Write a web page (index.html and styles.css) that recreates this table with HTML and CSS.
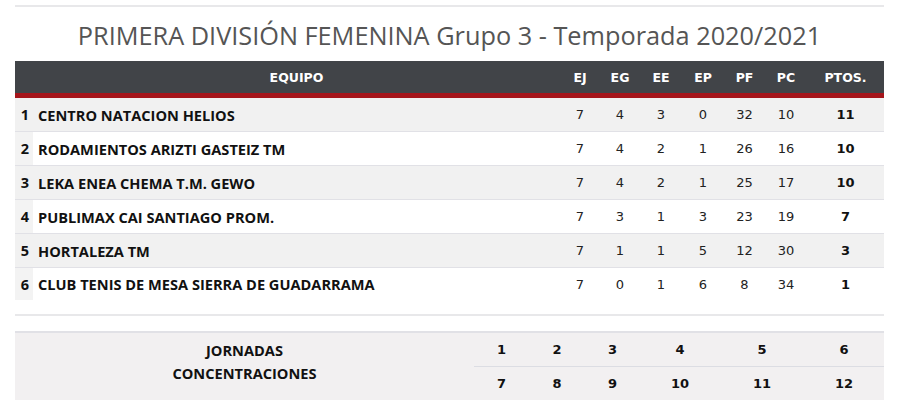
FILE: index.html
```html
<!DOCTYPE html>
<html>
<head>
<meta charset="utf-8">
<link rel="stylesheet" href="styles.css">
</head>
<body>
<div class="page">
  <div class="topline"></div>
  <h1 class="title">PRIMERA DIVISIÓN FEMENINA Grupo 3 - Temporada 2020/2021</h1>
  <table class="standings">
    <colgroup>
      <col class="c-rank"><col class="c-name"><col class="c-n40"><col class="c-n40"><col class="c-n42"><col class="c-n42"><col class="c-n41"><col class="c-n42"><col class="c-pts">
    </colgroup>
    <thead>
      <tr><th></th><th>EQUIPO</th><th>EJ</th><th>EG</th><th>EE</th><th>EP</th><th>PF</th><th>PC</th><th>PTOS.</th></tr>
    </thead>
    <tbody>
      <tr class="odd"><td class="rank">1</td><td class="name">CENTRO NATACION HELIOS</td><td>7</td><td>4</td><td>3</td><td>0</td><td>32</td><td>10</td><td class="pts">11</td></tr>
      <tr><td class="rank">2</td><td class="name">RODAMIENTOS ARIZTI GASTEIZ TM</td><td>7</td><td>4</td><td>2</td><td>1</td><td>26</td><td>16</td><td class="pts">10</td></tr>
      <tr class="odd"><td class="rank">3</td><td class="name">LEKA ENEA CHEMA T.M. GEWO</td><td>7</td><td>4</td><td>2</td><td>1</td><td>25</td><td>17</td><td class="pts">10</td></tr>
      <tr><td class="rank">4</td><td class="name">PUBLIMAX CAI SANTIAGO PROM.</td><td>7</td><td>3</td><td>1</td><td>3</td><td>23</td><td>19</td><td class="pts">7</td></tr>
      <tr class="odd"><td class="rank">5</td><td class="name">HORTALEZA TM</td><td>7</td><td>1</td><td>1</td><td>5</td><td>12</td><td>30</td><td class="pts">3</td></tr>
      <tr class="last"><td class="rank">6</td><td class="name">CLUB TENIS DE MESA SIERRA DE GUADARRAMA</td><td>7</td><td>0</td><td>1</td><td>6</td><td>8</td><td>34</td><td class="pts">1</td></tr>
    </tbody>
  </table>
  <div class="sepline"></div>
  <table class="rounds">
    <colgroup>
      <col class="r-label"><col class="r-a"><col class="r-b"><col class="r-c"><col class="r-d"><col class="r-e"><col class="r-f">
    </colgroup>
    <tr class="r1"><td class="label" rowspan="2">JORNADAS<br>CONCENTRACIONES</td><td>1</td><td>2</td><td>3</td><td>4</td><td>5</td><td>6</td></tr>
    <tr class="r2"><td>7</td><td>8</td><td>9</td><td>10</td><td>11</td><td>12</td></tr>
  </table>
</div>
</body>
</html>
```
FILE: styles.css
```css
html, body { margin: 0; padding: 0; background: #fff; }
.page { padding: 5px 15px 0 15px; }
.topline { height: 2px; background: #e8e8ea; }
.title {
  margin: 0;
  height: 54px;
  line-height: 57px;
  text-align: center;
  font-family: "Open Sans", sans-serif;
  font-weight: 400;
  font-size: 25.3px;
  color: #555;
  white-space: nowrap;
}
.standings {
  width: 100%;
  border-collapse: collapse;
  table-layout: fixed;
  font-family: "DejaVu Sans", Verdana, sans-serif;
  font-size: 13px;
  color: #222;
}
.c-rank { width: 18px; }
.c-n40 { width: 40px; }
.c-n41 { width: 41px; }
.c-n42 { width: 42px; }
.c-pts { width: 77px; }
.standings th {
  background: #414448;
  color: #fff;
  font-family: "DejaVu Sans", Verdana, sans-serif;
  font-weight: 700;
  font-size: 12.5px;
  height: 32px;
  padding: 0;
  text-align: center;
  border-bottom: 5px solid #a5151b;
}
.standings td {
  height: 33px;
  padding: 0;
  text-align: center;
  border-bottom: 1px solid #e1e1e6;
  white-space: nowrap;
}
.standings tr.last td { border-bottom: none; height: 32px; }
.standings tr.odd td { background: #f1f1f1; }
.standings td.rank {
  background: #f3f3f3;
  font-family: "Open Sans", sans-serif;
  font-weight: 700;
  font-size: 14.5px;
  color: #111;
  text-align: center;
  padding-left: 2px;
}
.standings td.name {
  text-align: left;
  padding-left: 5px;
  font-family: "Open Sans", sans-serif;
  font-weight: 700;
  font-size: 14.6px;
  color: #111;
}
.standings td.pts { font-weight: 700; color: #111; }
.sepline { height: 2px; background: #e8e8ea; margin-top: 14px; }
.rounds {
  margin-top: 15px;
  width: 100%;
  border-collapse: collapse;
  table-layout: fixed;
  background: #f2f0f1;
  border-top: 2px solid #e1e1e6;
  font-family: "DejaVu Sans", Verdana, sans-serif;
  font-weight: 700;
  font-size: 13px;
  color: #111;
}
.r-label { width: 459px; }
.r-a { width: 55px; }
.r-b { width: 56px; }
.r-c { width: 55px; }
.r-d { width: 80px; }
.r-e { width: 84px; }
.rounds td { height: 33px; padding: 0; text-align: center; }
.rounds tr.r1 td { border-bottom: 1px solid #dcdde3; }
.rounds tr.r1 td.label { border-bottom: none; }
.rounds td.label {
  font-family: "Open Sans", sans-serif;
  font-size: 14.6px;
  line-height: 23px;
  vertical-align: top;
  padding-top: 6px;
}
```
